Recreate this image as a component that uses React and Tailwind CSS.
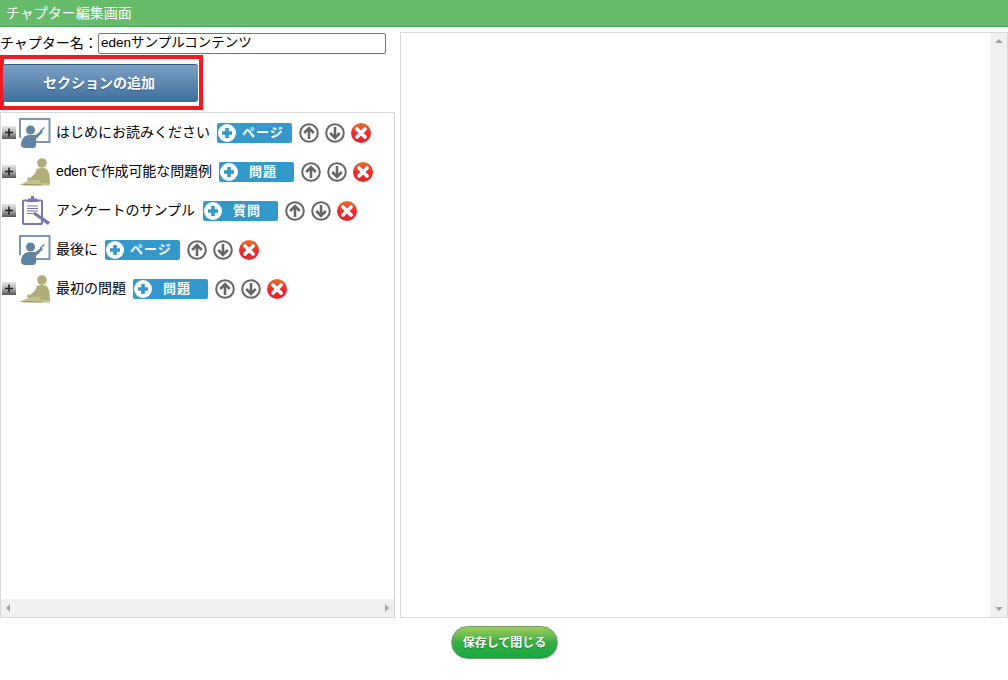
import React from "react";

const font = '"Liberation Sans", "Noto Sans CJK JP", sans-serif';

const sections = [
  { name: "はじめにお読みください", type: "lecture", label: "ページ", tree: true, nameClass: "w-[161px]", labelClass: "pl-[6px]" },
  { name: "edenで作成可能な問題例", type: "exam", label: "問題", tree: true, nameClass: "w-[163px] tracking-[-0.1px]", labelClass: "pl-[11px]" },
  { name: "アンケートのサンプル", type: "survey", label: "質問", tree: true, nameClass: "w-[147px]", labelClass: "pl-[11px]" },
  { name: "最後に", type: "lecture", label: "ページ", tree: false, nameClass: "w-[49px]", labelClass: "pl-[6px]" },
  { name: "最初の問題", type: "exam", label: "問題", tree: true, nameClass: "w-[77px]", labelClass: "pl-[11px]" },
];

const PlusBox = () => (
  <svg width="14" height="13" viewBox="0 0 14 13" className="shrink-0">
    <defs>
      <linearGradient id="plusBg" x1="0" y1="0" x2="0" y2="1">
        <stop offset="0" stopColor="#e8e8e8" />
        <stop offset="0.5" stopColor="#b0b0b0" />
        <stop offset="1" stopColor="#555" />
      </linearGradient>
    </defs>
    <rect x="0" y="0" width="14" height="13" fill="url(#plusBg)" />
    <path d="M3 6.500h8M7 2.500v8" stroke="#222" strokeWidth="1.600" />
  </svg>
);

const LectureIcon = () => (
  <svg width="32" height="33" viewBox="0 0 32 33">
    <path d="M1 22V3h29.500V26H15" fill="none" stroke="#7c97ad" strokeWidth="2" />
    <circle cx="11.500" cy="14" r="4.500" fill="#5f83a3" />
    <path d="M2 29c0-3 1-6 3.500-8.500 2-1.500 4-1.500 7-1.500h4l6-4.500 1.500 1.500-7 7v6c0 1.500-1 3-3 3H6c-2.500 0-4-1.500-4-3z" fill="#5f83a3" />
    <path d="M21 15.500l4.500-4" stroke="#5f83a3" strokeWidth="1.300" />
  </svg>
);

const ExamIcon = () => (
  <svg width="32" height="33" viewBox="0 0 32 33">
    <circle cx="23" cy="8" r="4.800" fill="#b0ad78" />
    <path d="M18 14c3-1.500 8-1.500 10 .5 2.500 3 3 8 3 14.500H14c1.500-5 1.500-11 4-15z" fill="#b0ad78" />
    <path d="M18 17l-7 6-2-1-1 3 4 2 8-5z" fill="#b0ad78" />
    <path d="M0 30l11-5h10v3h10v2.500H7z" fill="#c2bf90" />
    <path d="M4 29.500l19 .5" stroke="#8f8c5c" strokeWidth="0.800" />
  </svg>
);

const SurveyIcon = () => (
  <svg width="32" height="33" viewBox="0 0 32 33">
    <rect x="4" y="6.500" width="19" height="23.500" rx="1" fill="#fff" stroke="#7b77b0" strokeWidth="2" />
    <path d="M9 6V4.500h3V2h3v2.500h3V6l1 2H8z" fill="#7b77b0" />
    <path d="M8 12h11M8 14.500h11M8 17h11M8 19.500h5" stroke="#7b77b0" strokeWidth="1.200" />
    <path d="M13 19.500l3-1.500 15 10-2 3z" fill="#7b77b0" />
  </svg>
);

const icons = { lecture: LectureIcon, exam: ExamIcon, survey: SurveyIcon };

const ArrowCircle = ({ up }) => (
  <svg width="20" height="20" viewBox="0 0 20 20" className="shrink-0">
    <circle cx="10" cy="10" r="8.800" fill="#fff" stroke="#666" strokeWidth="2" />
    <path
      d={up ? "M10 16V5.500M5.200 10L10 5.200l4.800 4.800" : "M10 4V14.500M5.200 10L10 14.800l4.800-4.800"}
      fill="none"
      stroke="#666"
      strokeWidth="2.600"
    />
  </svg>
);

const DeleteIcon = () => (
  <svg width="20" height="20" viewBox="0 0 20 20" className="shrink-0">
    <defs>
      <linearGradient id="delBg" x1="0" y1="0" x2="0" y2="1">
        <stop offset="0" stopColor="#ec6f2c" />
        <stop offset="0.5" stopColor="#ee2b2b" />
        <stop offset="1" stopColor="#e8202c" />
      </linearGradient>
    </defs>
    <circle cx="10" cy="10" r="10" fill="url(#delBg)" />
    <path d="M6 6l8 8M14 6l-8 8" stroke="#fff" strokeWidth="3.800" strokeLinecap="round" />
  </svg>
);

const AddButton = ({ label, labelClass }) => (
  <div className="w-[75px] h-[20px] shrink-0 flex items-center bg-[#3399cc] rounded-[2px] pl-[1px] text-white text-[13px] font-bold">
    <span className="w-[18px] h-[18px] rounded-full bg-white flex items-center justify-center shrink-0">
      <svg width="12" height="12" viewBox="0 0 12 12">
        <path d="M6 1v10M1 6h10" stroke="#3399cc" strokeWidth="3.600" />
      </svg>
    </span>
    <span className={labelClass + " leading-none tracking-[1px] whitespace-nowrap"}>{label}</span>
  </div>
);

const Triangle = ({ className }) => <div className={className} />;

const SectionRow = ({ section }) => {
  const Icon = icons[section.type];
  return (
    <div className="h-[39px] flex items-center pl-[1px]">
      <div className="w-[14px] shrink-0 flex">{section.tree && <PlusBox />}</div>
      <div className="ml-[3px] w-[32px] shrink-0">
        <Icon />
      </div>
      <span className={section.nameClass + " ml-[5px] shrink-0 text-[14px] text-black whitespace-nowrap leading-none -mt-[1px]"}>
        {section.name}
      </span>
      <AddButton label={section.label} labelClass={section.labelClass} />
      <div className="ml-[7px] flex items-center gap-[6px]">
        <ArrowCircle up />
        <ArrowCircle />
        <DeleteIcon />
      </div>
    </div>
  );
};

const App = () => {
  return (
    <div className="w-[1008px] h-[680px] bg-white overflow-hidden flex flex-col" style={{ fontFamily: font }}>
      <div className="h-[27px] shrink-0 bg-[#66bb6a] border-b border-[#4f9f54] pl-[6px] flex items-center text-white text-[14px]">
        チャプター編集画面
      </div>

      <div className="h-[591px] shrink-0 pt-[5px] flex">
        <div className="w-[395px] shrink-0 flex flex-col">
          <div className="h-[22px] flex items-center text-[14px] text-black">
            <span className="w-[98px] shrink-0 whitespace-nowrap">チャプター名：</span>
            <div className="w-[288px] h-[21px] border border-[#767676] rounded-[2px] pl-[2px] flex items-center text-[13.500px] whitespace-nowrap">
              edenサンプルコンテンツ
            </div>
          </div>

          <div className="w-[203px] h-[55px] mt-[1px] shrink-0 border-[4px] border-[#ed1c24] pt-[5px] pr-[1px]">
            <div className="w-[195px] h-[38px] -ml-[1px] pr-[3px] rounded-[3px] border-t border-[#2f5a80] bg-gradient-to-b from-[#7c9fc3] to-[#3f6f9c] text-white text-[14px] font-bold [text-shadow:0_1px_1px_#2f5a80] flex items-center justify-center">
              セクションの追加
            </div>
          </div>

          <div className="mt-[2px] flex-1 border border-[#d9d9d9] border-r-[#d0d0d0] flex flex-col min-h-0">
            <div className="flex-1 overflow-hidden">
              {sections.map((section) => (
                <SectionRow key={section.name} section={section} />
              ))}
            </div>
            <div className="h-[18px] shrink-0 bg-[#f0f0f0] flex items-center justify-between px-[5px]">
              <Triangle className="w-0 h-0 border-y-[4px] border-y-transparent border-r-[4px] border-r-[#a3a3a3]" />
              <Triangle className="w-0 h-0 border-y-[4px] border-y-transparent border-l-[4px] border-l-[#a3a3a3]" />
            </div>
          </div>
        </div>

        <div className="ml-[5px] flex-1 border border-[#d9d9d9] flex justify-end">
          <div className="w-[17px] bg-[#f0f0f0] flex flex-col items-center justify-between py-[6px]">
            <Triangle className="w-0 h-0 border-x-[4px] border-x-transparent border-b-[4px] border-b-[#a3a3a3]" />
            <Triangle className="w-0 h-0 border-x-[4px] border-x-transparent border-t-[4px] border-t-[#a3a3a3]" />
          </div>
        </div>
      </div>

      <div className="flex justify-center pt-[8px] pl-[1px]">
        <div className="w-[107px] h-[33px] rounded-full border border-[#6f9a72] bg-gradient-to-b from-[#9ccf5c] via-[#35ad45] to-[#12a83f] text-white text-[12px] font-bold [text-shadow:0_1px_1px_#1f7a35] flex items-center justify-center">
          保存して閉じる
        </div>
      </div>
    </div>
  );
};

export default App;
